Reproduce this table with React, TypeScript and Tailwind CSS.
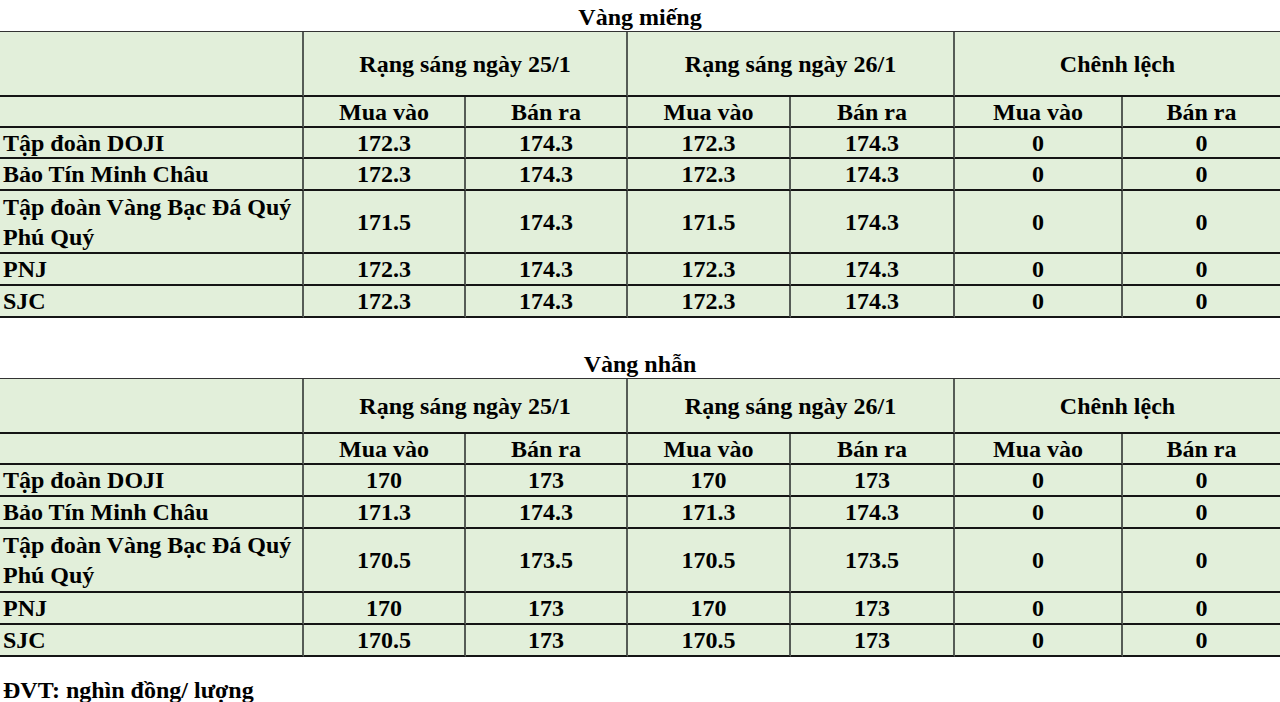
const cols = "grid grid-cols-[304px_162px_162px_163px_164px_168px_157px]";

type Row = { name: string[]; vals: string[]; h: string };

const mieng: Row[] = [
  { name: ["Tập đoàn DOJI"], vals: ["172.3", "174.3", "172.3", "174.3", "0", "0"], h: "h-[31px]" },
  { name: ["Bảo Tín Minh Châu"], vals: ["172.3", "174.3", "172.3", "174.3", "0", "0"], h: "h-[32px]" },
  { name: ["Tập đoàn Vàng Bạc Đá Quý", "Phú Quý"], vals: ["171.5", "174.3", "171.5", "174.3", "0", "0"], h: "h-[63px]" },
  { name: ["PNJ"], vals: ["172.3", "174.3", "172.3", "174.3", "0", "0"], h: "h-[32px]" },
  { name: ["SJC"], vals: ["172.3", "174.3", "172.3", "174.3", "0", "0"], h: "h-[32px]" },
];

const nhan: Row[] = [
  { name: ["Tập đoàn DOJI"], vals: ["170", "173", "170", "173", "0", "0"], h: "h-[32px]" },
  { name: ["Bảo Tín Minh Châu"], vals: ["171.3", "174.3", "171.3", "174.3", "0", "0"], h: "h-[32px]" },
  { name: ["Tập đoàn Vàng Bạc Đá Quý", "Phú Quý"], vals: ["170.5", "173.5", "170.5", "173.5", "0", "0"], h: "h-[64px]" },
  { name: ["PNJ"], vals: ["170", "173", "170", "173", "0", "0"], h: "h-[32px]" },
  { name: ["SJC"], vals: ["170.5", "173", "170.5", "173", "0", "0"], h: "h-[32px]" },
];

const cell = "bg-[#e2efda] border-b-2 border-b-[#151515] flex items-center";
const vline = "border-r-2 border-r-[#565c56]";

function PriceTable({ title, rows, headH }: { title: string; rows: Row[]; headH: string }) {
  return (
    <div>
      <div className="h-[31px] flex items-center justify-center pt-[3px]">{title}</div>
      <div className={`${cols} border-t border-t-[#333]`}>
        <div className={`${cell} ${vline} ${headH}`} />
        <div className={`${cell} ${vline} ${headH} col-span-2 justify-center`}>Rạng sáng ngày 25/1</div>
        <div className={`${cell} ${vline} ${headH} col-span-2 justify-center`}>Rạng sáng ngày 26/1</div>
        <div className={`${cell} ${headH} col-span-2 justify-center`}>Chênh lệch</div>

        <div className={`${cell} ${vline} h-[31px]`} />
        {["Mua vào", "Bán ra", "Mua vào", "Bán ra", "Mua vào", "Bán ra"].map((t, i) => (
          <div key={i} className={`${cell} ${i < 5 ? vline : ""} h-[31px] justify-center`}>
            {t}
          </div>
        ))}

        {rows.map((r) => (
          <div key={r.name.join()} className="contents">
            <div className={`${cell} ${vline} ${r.h} pl-[3px] leading-[30px]`}>
              <div>
                {r.name.map((n) => (
                  <div key={n}>{n}</div>
                ))}
              </div>
            </div>
            {r.vals.map((v, i) => (
              <div key={i} className={`${cell} ${i < 5 ? vline : ""} ${r.h} justify-center`}>
                {v}
              </div>
            ))}
          </div>
        ))}
      </div>
    </div>
  );
}

export default function App() {
  return (
    <div className="w-[1280px] h-[702px] overflow-hidden bg-white text-black font-bold text-[24px] font-['Liberation_Serif','Times_New_Roman',serif]">
      <PriceTable title="Vàng miếng" rows={mieng} headH="h-[65px]" />
      <div className="mt-[29px]">
        <PriceTable title="Vàng nhẫn" rows={nhan} headH="h-[55px]" />
      </div>
      <div className="mt-[18px] h-[30px] leading-[30px] pl-[3px]">ĐVT: nghìn đồng/ lượng</div>
    </div>
  );
}
